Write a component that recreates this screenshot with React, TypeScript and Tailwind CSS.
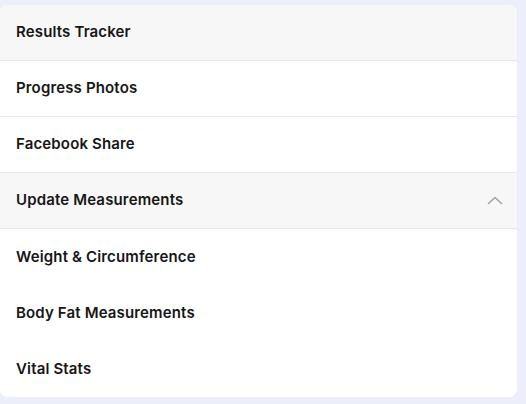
import React from 'react';

const topItems = ['Results Tracker', 'Progress Photos', 'Facebook Share'];
const subItems = ['Weight & Circumference', 'Body Fat Measurements', 'Vital Stats'];

const ChevronUp: React.FC = () => (
  <svg width="16" height="9" viewBox="0 0 16 9" fill="none" stroke="#a3a3a3" strokeWidth="1.6" strokeLinecap="round" strokeLinejoin="round">
    <path d="M1.5 7.5L8 1.5l6.5 6" />
  </svg>
);

export default function App() {
  return (
    <div className="w-[526px] h-[404px] bg-[#eceff9] pt-[5px] pr-[9px]" style={{ fontFamily: 'Inter, "Noto Sans", sans-serif' }}>
      <div className="bg-white rounded-lg overflow-hidden">
        {topItems.map((label, i) => (
          <div
            key={label}
            className={`h-[56px] flex items-center px-4 border-b border-[#e8e8e8] ${i === 0 ? 'bg-[#f7f7f7]' : 'bg-white'}`}
          >
            <span className="text-[15px] font-semibold text-[#161616] tracking-[0.15px]">{label}</span>
          </div>
        ))}
        <div className="h-[56px] flex items-center justify-between pl-4 pr-[14px] bg-[#f7f7f7] border-b border-[#e8e8e8]">
          <span className="text-[15px] font-semibold text-[#161616] tracking-[0.15px]">Update Measurements</span>
          <ChevronUp />
        </div>
        {subItems.map((label) => (
          <div key={label} className="h-[56px] flex items-center px-4">
            <span className="text-[15px] font-semibold text-[#161616] tracking-[0.15px]">{label}</span>
          </div>
        ))}
      </div>
    </div>
  );
}
